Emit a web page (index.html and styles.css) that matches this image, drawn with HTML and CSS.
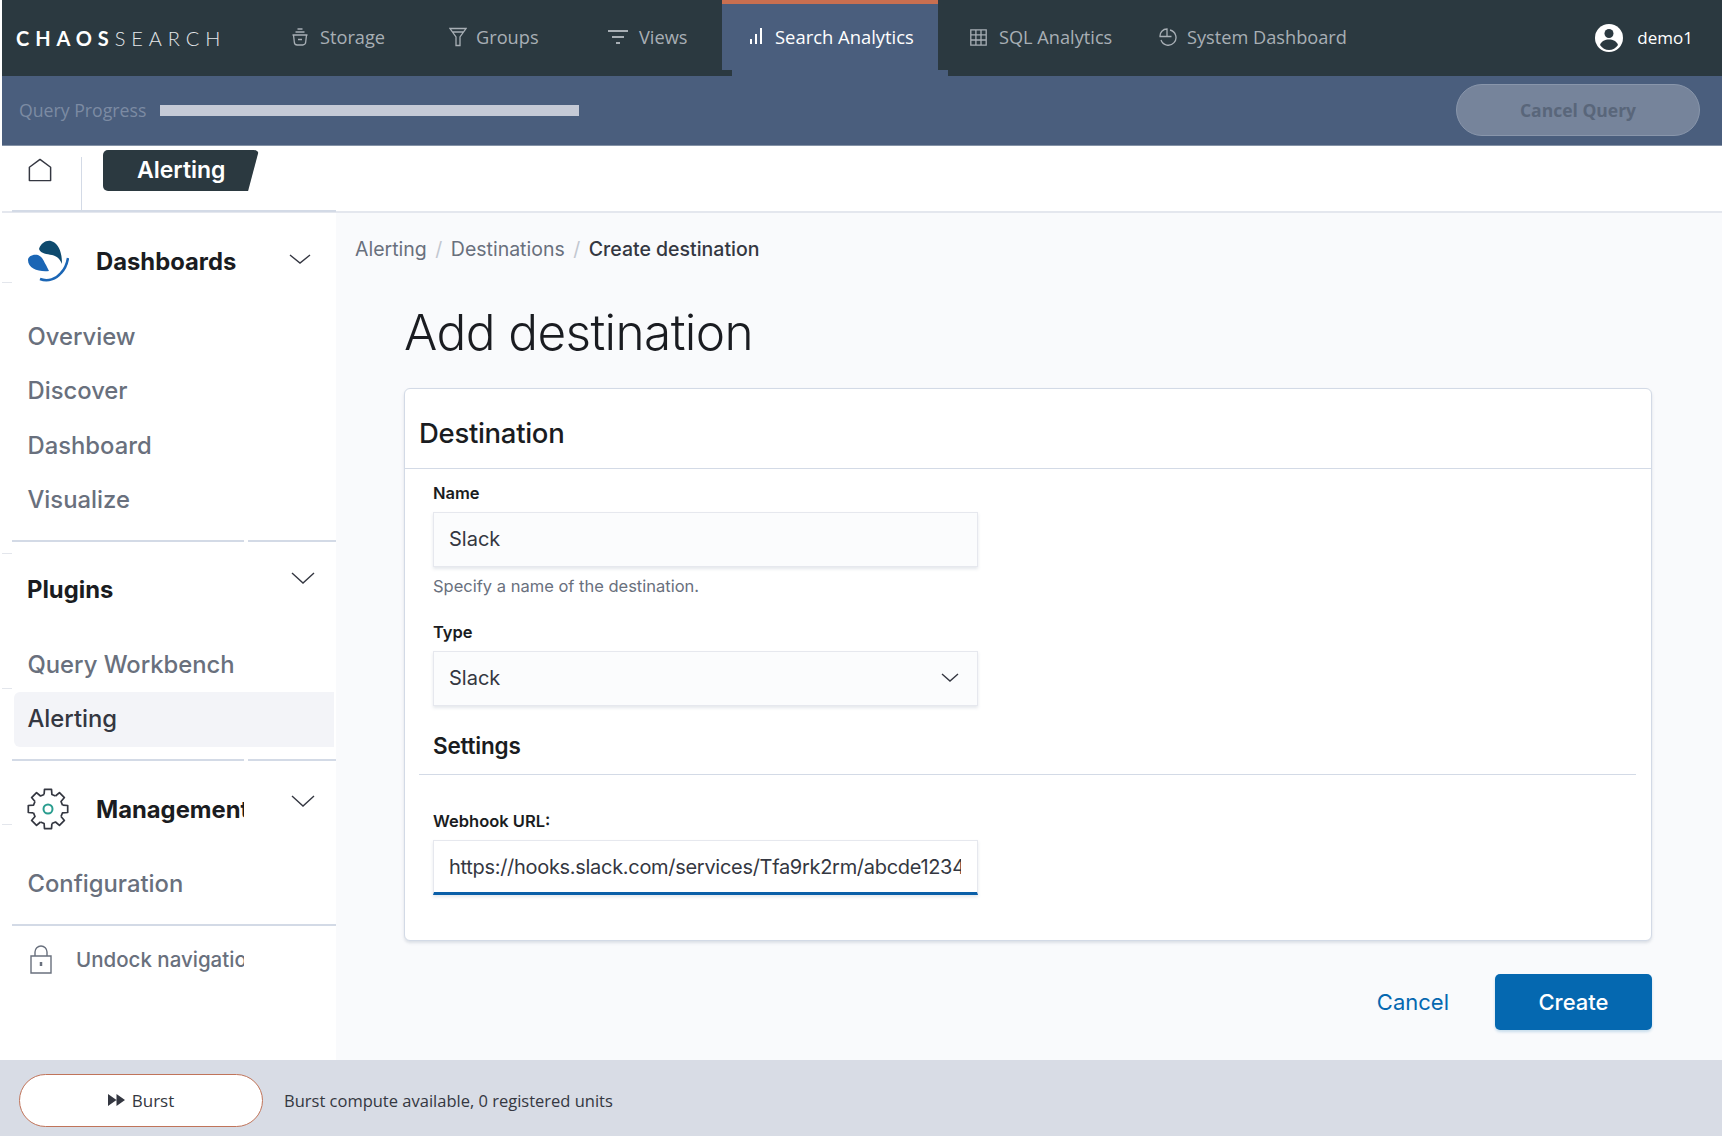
FILE: index.html
```html
<!DOCTYPE html>
<html lang="en">
<head>
<meta charset="utf-8">
<title>Add destination</title>
<link rel="stylesheet" href="styles.css">
</head>
<body>
<div class="app">
  <header class="topbar">
    <div class="brand"><b>CHAOS</b>SEARCH</div>
    <nav class="nav">
      <a class="nav-item storage">
        <svg class="ico" width="18" height="18" viewBox="0 0 18 18"><path d="M6.500 1h5M4.500 4h9M1.500 7h15M2.500 7l.8 7a3 3 0 0 0 3 3h5.400a3 3 0 0 0 3-3l.8-7M7 11.500h4"/></svg>Storage</a>
      <a class="nav-item groups">
        <svg class="ico" width="18" height="20" viewBox="0 0 18 20"><path d="M1 1.500h16L11 10v8.500H7V10zM3.500 5h11"/></svg>Groups</a>
      <a class="nav-item views">
        <svg class="ico" width="20" height="16" viewBox="0 0 20 16"><path class="thick" d="M0 2h20M4 8h12M8 14h4"/></svg>Views</a>
      <a class="nav-item search active">
        <svg class="ico" width="14" height="16" viewBox="0 0 14 16"><path class="thick" d="M2 11v5M7 6v10M12 0v16"/></svg>Search Analytics</a>
      <a class="nav-item sql">
        <svg class="ico" width="17" height="17" viewBox="0 0 17 17"><path d="M.8.8h15.400v15.400H.8zM.8 5.900h15.400M.8 11h15.400M5.900.8v15.400M11 .8v15.400"/></svg>SQL Analytics</a>
      <a class="nav-item system">
        <svg class="ico" width="18" height="18" viewBox="0 0 18 18"><path d="M8 1v7.500H1A7 7 0 0 1 8 1zM11 2a7.700 7.700 0 1 1-9 10M8 8.500h4.500"/></svg>System Dashboard</a>
    </nav>
    <div class="user">
      <svg width="28" height="28" viewBox="0 0 28 28"><circle cx="14" cy="14" r="14" fill="#fff"/><circle cx="14" cy="9.500" r="4.500" fill="#2b3940"/><path d="M5 21c1.500-4 5-5.500 9-5.500s7.500 1.500 9 5.500c-2 3-5.500 5-9 5s-7-2-9-5z" fill="#2b3940"/></svg>
      <span>demo1</span>
    </div>
    <span class="tab-notch"></span>
  </header>

  <section class="progress">
    <span class="progress-label">Query Progress</span>
    <span class="progress-bar"></span>
    <button class="cancel-query">Cancel Query</button>
  </section>

  <section class="crumbbar">
    <svg class="home" width="24" height="24" viewBox="0 0 26 26"><path d="M13 1.500 24.500 10v14.500h-23V10z"/></svg>
    <span class="crumb-sep"></span>
    <span class="crumb-tab">Alerting</span>
  </section>

  <div class="body">
    <aside class="sidebar">
      <div class="side-group first">
        <div class="side-head">
          <svg class="side-icon" width="42" height="42" viewBox="0 0 42 42">
            <path d="M12 9C14 3 19 0 24 1c7 2 11 10 11 23-2-5-5-8-10-9-5-1-11-1-13-6z" fill="#0e4a6e"/>
            <path d="M1 20c0-3 4-6 10-5 5 2 6 7 8 10l3 6c-10 1-21-2-21-11z" fill="#1b66b5"/>
            <path d="M13 39c8 3 16 0 21-6 4-4 6-9 7-15" fill="none" stroke="#1b66b5" stroke-width="2.500"/>
          </svg>
          <span class="side-title">Dashboards</span>
          <svg class="chev" width="22" height="10" viewBox="0 0 22 10"><path d="M1 1l10 8 10-8"/></svg>
        </div>
        <a class="side-link">Overview</a>
        <a class="side-link">Discover</a>
        <a class="side-link">Dashboard</a>
        <a class="side-link">Visualize</a>
      </div>

      <div class="side-group plugins">
        <div class="side-head">
          <span class="side-title bare">Plugins</span>
          <svg class="chev up" width="24" height="12" viewBox="0 0 24 12"><path d="M1 1l11 10L23 1"/></svg>
        </div>
        <a class="side-link">Query Workbench</a>
        <a class="side-link current">Alerting</a>
      </div>

      <div class="side-group mgmt">
        <div class="side-head">
          <svg class="side-icon gear" width="42" height="42" viewBox="0 0 42 42">
            <g><path d="M35.500 17.100l5.200.4v7l-5.200.4-1.500 3.600"/></g>
            <g transform="rotate(45 21 21)"><path d="M35.500 17.100l5.200.4v7l-5.200.4-1.500 3.600"/></g>
            <g transform="rotate(90 21 21)"><path d="M35.500 17.100l5.200.4v7l-5.200.4-1.500 3.600"/></g>
            <g transform="rotate(135 21 21)"><path d="M35.500 17.100l5.200.4v7l-5.200.4-1.500 3.600"/></g>
            <g transform="rotate(180 21 21)"><path d="M35.500 17.100l5.200.4v7l-5.200.4-1.500 3.600"/></g>
            <g transform="rotate(225 21 21)"><path d="M35.500 17.100l5.200.4v7l-5.200.4-1.500 3.600"/></g>
            <g transform="rotate(270 21 21)"><path d="M35.500 17.100l5.200.4v7l-5.200.4-1.500 3.600"/></g>
            <g transform="rotate(315 21 21)"><path d="M35.500 17.100l5.200.4v7l-5.200.4-1.500 3.600"/></g>
            <circle class="gear-hub" cx="21" cy="21" r="4.500"/>
          </svg>
          <span class="side-title clip">Management</span>
          <svg class="chev up" width="24" height="12" viewBox="0 0 24 12"><path d="M1 1l11 10L23 1"/></svg>
        </div>
        <a class="side-link">Configuration</a>
      </div>

      <div class="side-foot">
        <svg class="lock" width="22" height="29" viewBox="0 0 22 29"><path d="M1 11h20v17H1zM5 11V7a6 6 0 0 1 12 0v4"/><path class="lock-dot" d="M11 17v4"/></svg>
        <span class="undock">Undock navigation</span>
      </div>
    </aside>

    <main class="main">
      <nav class="breadcrumbs">
        <a>Alerting</a><i>/</i><a>Destinations</a><i>/</i><b>Create destination</b>
      </nav>
      <div class="page">
        <h1>Add destination</h1>
        <section class="card">
          <h2>Destination</h2>
          <div class="card-body">
            <div class="field">
              <label>Name</label>
              <div class="input">Slack</div>
              <p class="help">Specify a name of the destination.</p>
            </div>
            <div class="field">
              <label>Type</label>
              <div class="input select">Slack
                <svg class="chev" width="18" height="9" viewBox="0 0 18 9"><path d="M1 1l8 7 8-7"/></svg>
              </div>
            </div>
            <h3>Settings</h3>
            <div class="field webhook">
              <label>Webhook URL:</label>
              <div class="input focus"><span>https://hooks.slack.com/services/Tfa9rk2rm/abcde12345</span></div>
            </div>
          </div>
        </section>
        <div class="actions">
          <a class="link">Cancel</a>
          <button class="primary">Create</button>
        </div>
      </div>
    </main>
  </div>

  <footer class="footer">
    <button class="burst"><svg width="17" height="12" viewBox="0 0 17 12"><path d="M0 0l8.500 6L0 12zM8.500 0L17 6l-8.500 6z"/></svg>Burst</button>
    <span class="burst-note">Burst compute available, 0 registered units</span>
  </footer>
</div>
</body>
</html>
```
FILE: styles.css
```css
* { box-sizing: border-box; }
html, body { margin: 0; height: 100%; background: #fff; }
body { overflow: hidden; font-family: "Inter", "Liberation Sans", sans-serif; color: #1a1c21; }
.app { height: 1136px; padding-left: 2px; display: flex; flex-direction: column; overflow: hidden; }

/* top bar */
.topbar { position: relative; flex: 0 0 76px; background: #2b3940; display: flex; align-items: flex-start; font-family: "Open Sans", "Liberation Sans", sans-serif; }
.brand { width: 289px; flex: none; padding-left: 14px; height: 70px; line-height: 76px; font-family: "Lato", sans-serif; font-size: 20px; color: #e4e7ea; letter-spacing: 5.900px; font-weight: 300; white-space: nowrap; }
.brand b { font-weight: 700; color: #fff; }
.nav { display: flex; height: 70px; align-items: stretch; }
.nav-item { display: flex; align-items: center; gap: 11px; font-size: 18.200px; color: #a8afb5; white-space: nowrap; padding-top: 4px; }
.ico { fill: none; stroke: currentColor; stroke-width: 1.300; flex: none; }
.ico .thick { stroke-width: 2; }
.storage { width: 158px; }
.groups { width: 159px; gap: 9px; }
.views { width: 114px; }
.search { width: 216px; padding: 0 0 2px 27px; gap: 12px; color: #fff; font-size: 18.400px; font-weight: 500; background: #4a5e7d; border-top: 4px solid #c96f50; }
.sql { width: 221px; padding-left: 32px; gap: 12px; }
.system { gap: 10px; }
.user { margin-left: auto; display: flex; align-items: center; gap: 14px; height: 75px; padding-right: 29px; color: #fff; font-size: 17px; font-weight: 500; }
.tab-notch { position: absolute; left: 730px; top: 70px; width: 216px; height: 6px; background: #4a5e7d; }

/* progress */
.progress { flex: 0 0 70px; background: #4a5e7d; border-bottom: 1px solid #8492a6; display: flex; align-items: center; padding: 0 22px 0 17px; font-family: "Open Sans", "Liberation Sans", sans-serif; }
.progress-label { width: 141px; margin-bottom: 2px; font-size: 17.700px; color: #7c8ba3; white-space: nowrap; }
.progress-bar { width: 419px; height: 11px; background: #c5cad6; }
.cancel-query { margin: 0 0 2px auto; width: 244px; height: 52px; border-radius: 26px; background: #76849b; border: 1.500px solid #8996ab; color: #59667a; font: 700 17.500px "Open Sans", sans-serif; }

/* crumb bar */
.crumbbar { flex: 0 0 67px; display: flex; align-items: flex-start; border-bottom: 2px solid #e4e7ee; }
.home { margin: 12px 0 0 26px; fill: none; stroke: #343741; stroke-width: 1.600; stroke-linejoin: round; flex: none; }
.crumb-sep { width: 1px; height: 54px; margin: 11px 21px 0 29px; background: #d3dae6; }
.crumb-tab { margin-top: 4px; width: 156px; height: 41px; padding-left: 34px; line-height: 40px; background: #2b3940; color: #fff; font-size: 23px; font-weight: 600; border-radius: 5px; clip-path: polygon(0 0, 100% 0, 93% 100%, 0 100%); }

/* body */
.body { flex: 1; min-height: 0; display: flex; background: #f9fafc; }
.sidebar { width: 334px; flex: none; padding: 0 0 0 10px; display: flex; flex-direction: column;
  background:
    linear-gradient(#e3e6ec, #e3e6ec) 0 69px / 10px 1px no-repeat,
    linear-gradient(#e3e6ec, #e3e6ec) 0 340px / 10px 1px no-repeat,
    linear-gradient(#e3e6ec, #e3e6ec) 0 475px / 10px 1px no-repeat,
    linear-gradient(#e3e6ec, #e3e6ec) 0 611px / 10px 1px no-repeat,
    #fff; }
.side-group { position: relative; border-bottom: 2px solid #d3dae6; }
.side-group.first { margin-top: -3px; height: 332px; padding-top: 28px; border-top: 2px solid #d3dae6; }
.side-group.plugins { height: 219px; padding-top: 21px; }
.side-group.mgmt { height: 165px; padding-top: 27px; }
.first::after, .plugins::after { content: ""; position: absolute; left: 232px; bottom: -2px; width: 4px; height: 2px; background: #fff; }
.side-head { position: relative; display: flex; align-items: center; height: 42px; padding-left: 15px; }
.side-icon { flex: none; margin-right: 27px; }
.gear path { fill: none; stroke: #343741; stroke-width: 1.700; stroke-linejoin: round; }
.gear-hub { fill: none; stroke: #2a9d8f; stroke-width: 2; }
.side-title { font-size: 23.800px; font-weight: 700; color: #1a1c21; white-space: nowrap; }
.side-title.clip { width: 148px; overflow: hidden; }
.chev { fill: none; stroke: #343741; stroke-width: 1.400; }
.side-head .chev { position: absolute; left: 277px; top: 14px; }
.side-head .chev.up { left: 279px; top: 7px; }
.first .side-head { margin-bottom: 28px; }
.plugins .side-head { height: 52px; margin-bottom: 23px; }
.plugins .chev.up { top: 9px; }
.side-link { display: block; height: 54.400px; line-height: 54px; padding-left: 15.500px; font-size: 23.800px; font-weight: 500; color: #69707d; white-space: nowrap; }
.mgmt .side-link { margin-top: 27px; }
.side-link.current { width: 320px; margin-left: 2px; padding-left: 13.500px; color: #343741; background: #f3f4f8; border-radius: 6px 0 0 6px; }
.side-foot { display: flex; align-items: center; height: 66px; padding-left: 18px; gap: 24px; }
.lock { flex: none; fill: none; stroke: #69707d; stroke-width: 1.400; }
.lock .lock-dot { stroke-width: 2.500; }
.undock { width: 168px; overflow: hidden; white-space: nowrap; font-size: 20.500px; font-weight: 500; color: #69707d; }

/* main */
.main { flex: 1; min-width: 0; padding: 21px 70px 0 19px; }
.breadcrumbs { display: flex; align-items: center; height: 30px; font-size: 19.500px; color: #69707d; }
.breadcrumbs i { font-style: normal; margin: 0 8.500px; color: #c2c7d0; }
.breadcrumbs b { font-weight: 500; color: #343741; }
.page { padding-left: 49px; }
h1 { margin: 38px 0 0; height: 86px; font-size: 49.500px; line-height: 60px; font-weight: 300; letter-spacing: -.6px; color: #1a1c21; }
.card { height: 553px; background: #fff; border: 1px solid #d3dae6; border-radius: 6px; box-shadow: 0 2px 3px rgba(152,162,179,.3); }
h2 { margin: 0; height: 80px; line-height: 89px; padding-left: 14px; font-size: 27.500px; font-weight: 500; border-bottom: 1px solid #d3dae6; letter-spacing: -.3px; }
.card-body { padding: 12px 15px 0 14px; }
.field { width: 545px; margin-left: 14px; }
label { display: block; height: 31px; line-height: 24px; font-size: 16.500px; font-weight: 600; color: #1a1c21; }
.input { position: relative; height: 55px; line-height: 52px; padding-left: 15px; font-size: 20px; color: #343741; background: #fbfcfd; border: 1px solid #e6e8ee; box-shadow: 0 2px 3px rgba(152,162,179,.25); }
.help { margin: 8px 0 0; height: 27px; line-height: 22px; font-size: 16.500px; color: #69707d; }
.select .chev { position: absolute; right: 18px; top: 21px; }
.field + .field { margin-top: 18px; }
h3 { margin: 24px 0 0; height: 45px; line-height: 32px; padding-left: 14px; font-size: 22.500px; font-weight: 600; border-bottom: 1px solid #d3dae6; letter-spacing: -.2px; }
.field.webhook { margin-top: 34px; }
.focus { background: #fff; border-bottom: 3px solid #0a5fa8; padding-right: 16px; letter-spacing: -.3px; }
.focus span { display: block; overflow: hidden; white-space: nowrap; }
.actions { display: flex; justify-content: flex-end; align-items: center; gap: 46px; margin-top: 33px; }
.link { font-size: 22px; color: #0568b0; }
.primary { width: 157px; height: 56px; border: 0; border-radius: 5px; background: #0568b0; color: #fff; font: 500 22px "Inter", sans-serif; box-shadow: 0 2px 3px rgba(5,104,176,.2); }

/* footer */
.footer { flex: 0 0 76px; margin-left: -2px; padding: 4px 0 0 2px; background: #d8dce5; display: flex; align-items: center; font-family: "Open Sans", "Liberation Sans", sans-serif; }
.burst { display: flex; align-items: center; justify-content: center; gap: 7px; margin-left: 17px; width: 244px; height: 53px; border-radius: 27px; background: #fff; border: 1.500px solid #c0745a; font: 400 17px "Open Sans", sans-serif; color: #343741; }
.burst svg { fill: #343741; }
.burst-note { margin-left: 21px; font-size: 16.500px; color: #343741; }
```
